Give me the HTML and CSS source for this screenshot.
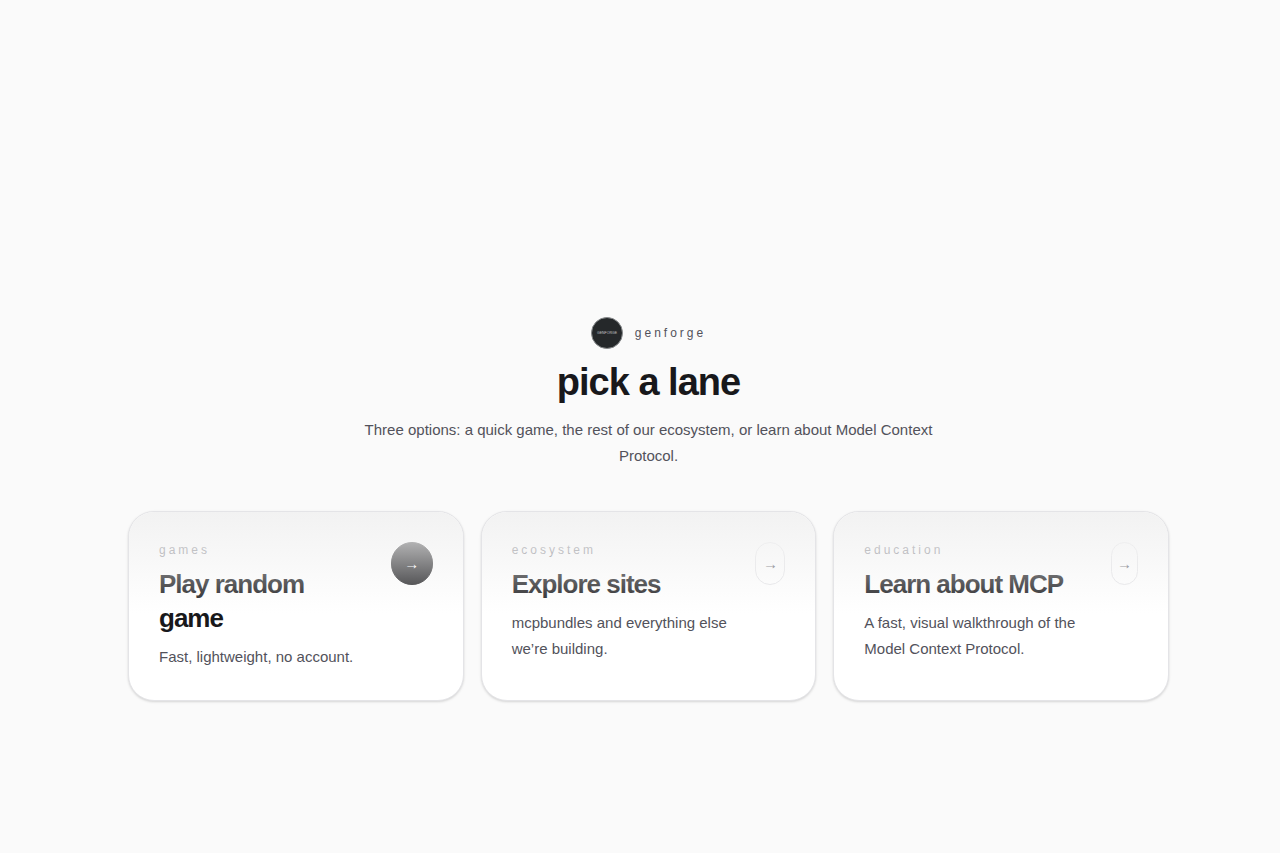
FILE: index.html
```html
<!DOCTYPE html>
<html lang="en">
<head>
<meta charset="utf-8">
<meta name="viewport" content="width=device-width, initial-scale=1">
<title>genforge</title>
<link rel="stylesheet" href="styles.css">
</head>
<body>
<main class="page">
  <header class="intro">
    <div class="brand">
      <svg class="brand-logo" viewBox="0 0 64 64" aria-hidden="true">
        <circle cx="32" cy="32" r="31" fill="#25282a" stroke="#888b8d" stroke-width="2"/>
        <text x="32" y="34" text-anchor="middle" class="brand-mark">GENFORGE</text>
      </svg>
      <span class="brand-name">genforge</span>
    </div>
    <h1 class="title">pick a lane</h1>
    <p class="lead">Three options: a quick game, the rest of our ecosystem, or learn about Model Context Protocol.</p>
  </header>
  <nav class="lanes" aria-label="Lanes">
    <a class="card" href="#games">
      <div class="card-text">
        <p class="label">games</p>
        <h2 class="card-title">Play random game</h2>
        <p class="desc">Fast, lightweight, no account.</p>
      </div>
      <span class="arrow arrow-primary" aria-hidden="true">→</span>
    </a>
    <a class="card" href="#ecosystem">
      <div class="card-text">
        <p class="label">ecosystem</p>
        <h2 class="card-title">Explore sites</h2>
        <p class="desc">mcpbundles and everything else we’re building.</p>
      </div>
      <span class="arrow" aria-hidden="true">→</span>
    </a>
    <a class="card" href="#education">
      <div class="card-text">
        <p class="label">education</p>
        <h2 class="card-title">Learn about MCP</h2>
        <p class="desc">A fast, visual walkthrough of the Model Context Protocol.</p>
      </div>
      <span class="arrow" aria-hidden="true">→</span>
    </a>
  </nav>
</main>
</body>
</html>
```
FILE: styles.css
```css
* {
  box-sizing: border-box;
}

body {
  margin: 0;
  background: #fafafa;
  color: #18181b;
  font-family: "Liberation Sans", Arial, sans-serif;
}

h1, h2, p {
  margin: 0;
}

.page {
  min-height: 100vh;
  padding: 317px 111px 48px 128px;
}

.intro {
  display: flex;
  flex-direction: column;
  align-items: center;
  text-align: center;
}

.brand {
  display: flex;
  align-items: center;
  gap: 12px;
}

.brand-logo {
  width: 32px;
  height: 32px;
}

.brand-mark {
  font-size: 7px;
  fill: #c4c7c9;
}

.brand-name {
  font-size: 12px;
  line-height: 18px;
  letter-spacing: 3px;
  color: #52525b;
}

.title {
  margin-top: 11px;
  font-size: 38px;
  line-height: 44px;
  letter-spacing: -1px;
}

.lead {
  max-width: 600px;
  margin-top: 13px;
  font-size: 15px;
  line-height: 26px;
  color: #52525b;
}

.lanes {
  display: grid;
  grid-template-columns: repeat(3, 1fr);
  gap: 17px;
  margin-top: 42px;
}

.card {
  position: relative;
  display: flex;
  align-items: flex-start;
  gap: 24px;
  padding: 30px;
  overflow: hidden;
  border: 1px solid #e4e4e7;
  border-radius: 26px;
  background: #fff;
  box-shadow: 0 1px 3px rgba(0, 0, 0, 0.1), 0 1px 2px rgba(0, 0, 0, 0.06);
  color: inherit;
  text-decoration: none;
}

.card::after {
  content: "";
  position: absolute;
  inset: 0 0 auto;
  height: 102px;
  background: linear-gradient(#f2f2f2, rgba(255, 255, 255, 0));
  pointer-events: none;
}

.card-text {
  flex: 0 1 auto;
  margin-right: auto;
}

.label {
  font-size: 12px;
  line-height: 17px;
  letter-spacing: 3px;
  color: #71717a;
}

.card-title {
  margin-top: 8px;
  font-size: 26px;
  line-height: 34px;
  letter-spacing: -1px;
}

.desc {
  margin-top: 9px;
  font-size: 15px;
  line-height: 26px;
  color: #52525b;
}

.arrow {
  display: flex;
  align-items: center;
  justify-content: center;
  width: 42px;
  min-width: 27px;
  height: 43px;
  border: 1px solid #e4e4e7;
  border-radius: 22px;
  background: #fff;
  font-size: 15px;
  color: #52525b;
}

.arrow-primary {
  flex-shrink: 0;
  border-color: #18181b;
  background: #18181b;
  color: #fff;
}
```
